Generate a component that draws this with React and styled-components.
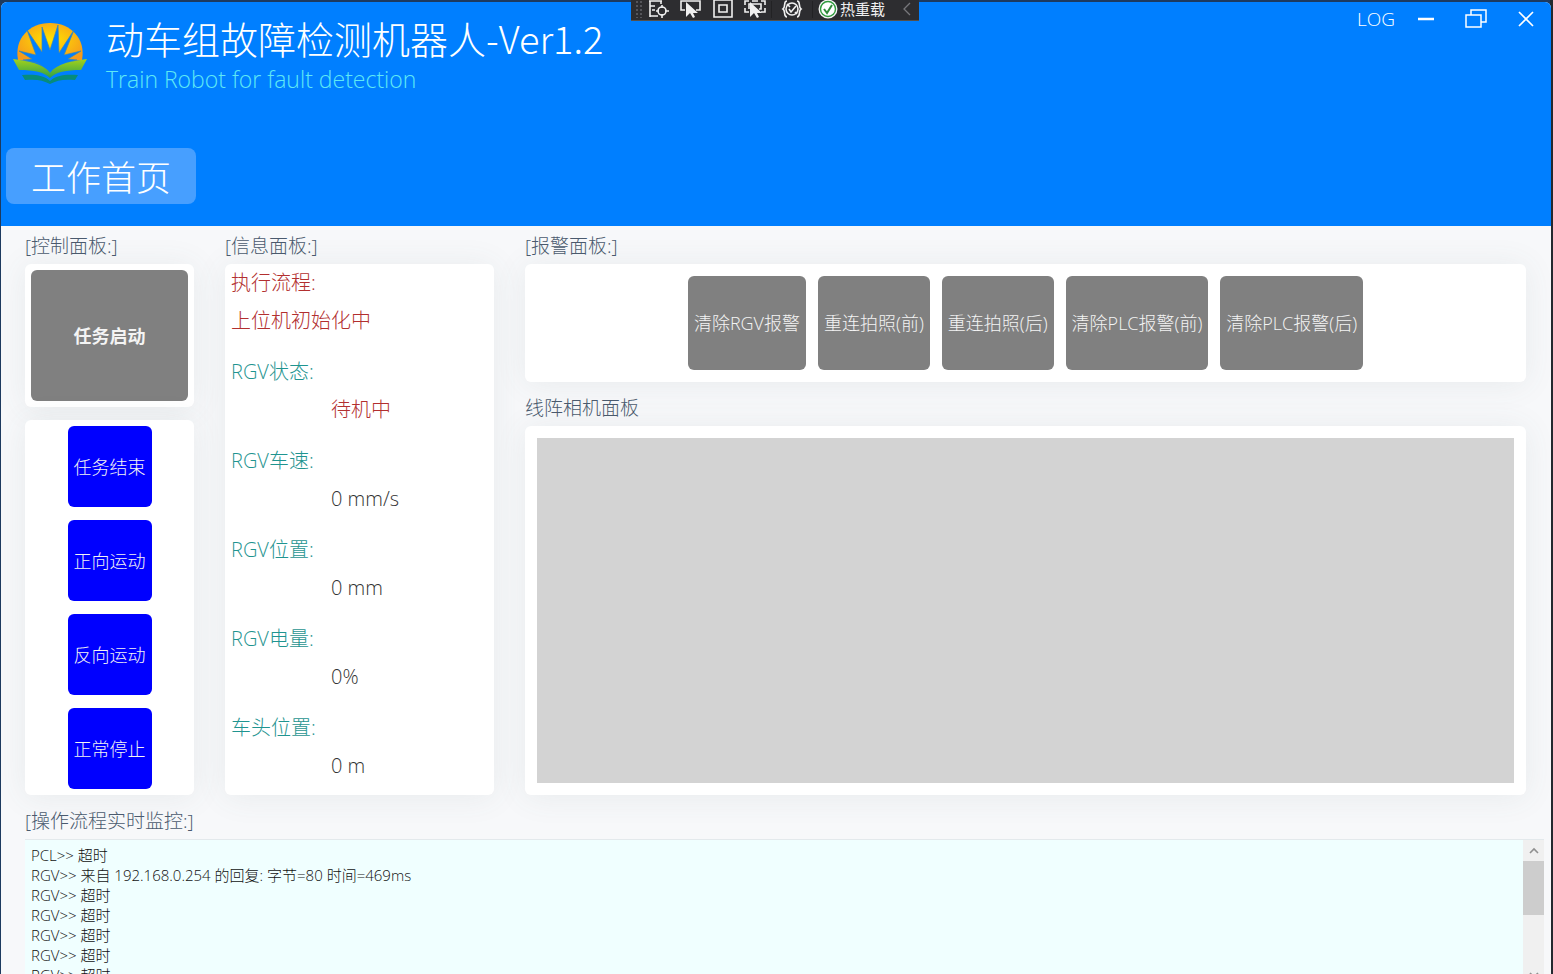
import styled, { createGlobalStyle, css } from 'styled-components';

const GlobalStyle = createGlobalStyle`
  *, *::before, *::after {
    box-sizing: border-box;
    margin: 0;
    padding: 0;
  }

  body {
    background-color: #24292f;
    font-family: 'Open Sans', 'Noto Sans CJK SC', sans-serif;
    font-weight: 300;
    overflow: hidden;
  }

  button {
    font: inherit;
    color: inherit;
    border: none;
    background: none;
    cursor: pointer;
  }
`;

const Desktop = styled.div`
  height: 100vh;
  padding: 2px 2px 0 1px;
  background-color: #1d3a5f;
  background-image: linear-gradient(#24292f, #24292f);
  background-size: 3px 100%;
  background-position: right;
  background-repeat: no-repeat;
  overflow: hidden;
`;

const Window = styled.div`
  min-height: 100%;
  background-color: #f7f8fa;
  border-radius: 6px 6px 0 0;
  overflow: hidden;
`;

const Header = styled.header`
  display: flex;
  flex-direction: column;
  justify-content: space-between;
  height: 224px;
  padding: 16px 5px 22px;
  background-color: #007fff;
  color: #fff;
`;

const HeaderTop = styled.div`
  display: flex;
  justify-content: space-between;
  align-items: flex-start;
`;

const Brand = styled.div`
  display: flex;
  gap: 18px;
  padding-left: 6px;
`;

const Logo = styled.svg`
  width: 76px;
  height: 64px;
  margin-top: 4px;
`;

const Title = styled.h1`
  font-family: 'Noto Sans CJK SC', sans-serif;
  font-size: 38px;
  font-weight: 300;
  line-height: 40px;
`;

const Subtitle = styled.p`
  font-size: 23px;
  line-height: 42px;
  color: #5fe8f5;
`;

const WindowActions = styled.div`
  display: flex;
  align-items: center;
  height: 32px;
  margin-top: -15px;
  gap: 10px;
`;

const WindowButton = styled.button`
  display: grid;
  place-items: center;
  min-width: 40px;
  height: 32px;
  font-size: 19px;
`;

const TabButton = styled.button`
  align-self: flex-start;
  width: 190px;
  height: 56px;
  padding-top: 4px;
  background-color: #479fff;
  border-radius: 8px;
  font-size: 35px;
  line-height: 52px;
`;

const DebugBar = styled.div`
  position: absolute;
  top: 0;
  left: 631px;
  display: flex;
  align-items: center;
  width: 288px;
  height: 21px;
  padding: 0 6px 2px 4px;
  background-color: #2d2d30;
  border-bottom: 1px solid #55504a;
  color: #f0f0f0;
  font-size: 16px;
`;

const DebugButton = styled.button`
  display: flex;
  align-items: center;
  justify-content: center;
  width: ${(props) => (props.$wide ? '42px' : '32px')};
  height: 17px;
  border-left: ${(props) => (props.$wide ? '1px solid #222224' : 'none')};
  border-right: ${(props) => (props.$wide ? '1px solid #222224' : 'none')};
`;

const Grip = styled.div`
  width: 8px;
  height: 18px;
  background-image: radial-gradient(#55555a 1px, transparent 1px);
  background-size: 4px 4px;
`;

const Reload = styled.button`
  display: flex;
  align-items: center;
  flex: 1;
  gap: 2px;
  padding-left: 5px;
  font-size: 15px;
  font-weight: 400;
  line-height: 18px;
  white-space: nowrap;
`;

const Main = styled.main`
  display: grid;
  grid-template-columns: 169px 269px 1fr;
  column-gap: 31px;
  padding: 0 25px 0 24px;
`;

const Column = styled.section`
  display: flex;
  flex-direction: column;
`;

const PanelTitle = styled.h2`
  padding: 7px 0 4px;
  font-size: 19px;
  font-weight: 300;
  line-height: 27px;
  color: #4a5a6e;
`;

const CameraTitle = styled(PanelTitle)`
  margin-top: 6px;
`;

const Card = styled.div`
  background-color: #fff;
  border-radius: 6px;
  box-shadow: 0 2px 32px rgba(80, 100, 95, 0.09);
`;

const StartCard = styled(Card)`
  display: flex;
  height: 143px;
  margin-bottom: 13px;
  padding: 6px;
`;

const MotionCard = styled(Card)`
  display: flex;
  flex-direction: column;
  align-items: center;
  gap: 13px;
  padding: 6px;
`;

const InfoCard = styled(Card)`
  flex: 1;
  padding: 0 6px;
  font-size: 20px;
  line-height: 38px;
`;

const AlarmCard = styled(Card)`
  display: flex;
  justify-content: center;
  gap: 12px;
  padding: 12px;
`;

const CameraCard = styled(Card)`
  display: flex;
  flex: 1;
  padding: 12px;
`;

const CameraView = styled.div`
  flex: 1;
  background-color: #d3d3d3;
`;

const ActionButton = styled.button`
  padding: 0 6px 2px;
  border-radius: 6px;
  font-size: 18px;
  color: #f4f4f4;
  white-space: nowrap;

  ${(props) =>
    props.$kind === 'start' &&
    css`
      flex: 1;
      background-color: #808080;
      font-weight: 700;
    `}

  ${(props) =>
    props.$kind === 'motion' &&
    css`
      height: 81px;
      background-color: #0000ff;
    `}

  ${(props) =>
    props.$kind === 'alarm' &&
    css`
      height: 94px;
      background-color: #808080;
    `}
`;

const InfoItem = styled.dl`
  margin-bottom: 13px;

  &:last-child {
    margin-bottom: 0;
  }
`;

const InfoLabel = styled.dt`
  color: ${(props) => (props.$alert ? '#b22f2f' : '#1f9490')};
`;

const InfoValue = styled.dd`
  padding-left: ${(props) => (props.$flush ? '0' : '100px')};
  color: ${(props) => (props.$alert ? '#b22f2f' : '#333')};
`;

const Monitor = styled.section`
  padding: 6px 7px 0 24px;
`;

const LogBox = styled.div`
  display: flex;
  height: 146px;
  border-top: 1px solid #e3e9ec;
  background-color: #f0ffff;
  overflow: hidden;
`;

const LogList = styled.ul`
  flex: 1;
  padding: 5px 6px;
  list-style: none;
  font-size: 15px;
  line-height: 20px;
  color: #111;
`;

const ScrollBar = styled.div`
  display: flex;
  flex-direction: column;
  width: 21px;
  background-color: #f0f0f0;
  color: #909090;
`;

const ScrollButton = styled.button`
  display: grid;
  place-items: center;
  height: 21px;
`;

const ScrollThumb = styled.div`
  height: 54px;
  margin-bottom: auto;
  background-color: #cdcdcd;
`;

const motions = ['任务结束', '正向运动', '反向运动', '正常停止'];

const alarms = [
  '清除RGV报警',
  '重连拍照(前)',
  '重连拍照(后)',
  '清除PLC报警(前)',
  '清除PLC报警(后)',
];

const infos = [
  { label: '执行流程:', value: '上位机初始化中', alertLabel: true, alert: true, flush: true },
  { label: 'RGV状态:', value: '待机中', alert: true },
  { label: 'RGV车速:', value: '0 mm/s' },
  { label: 'RGV位置:', value: '0 mm' },
  { label: 'RGV电量:', value: '0%' },
  { label: '车头位置:', value: '0 m' },
];

const logs = [
  'PCL>> 超时',
  'RGV>> 来自 192.168.0.254 的回复: 字节=80 时间=469ms',
  'RGV>> 超时',
  'RGV>> 超时',
  'RGV>> 超时',
  'RGV>> 超时',
  'RGV>> 超时',
];

function SunLogo() {
  return (
    <Logo viewBox="0 0 76 64" aria-hidden="true">
      <defs>
        <radialGradient id="sun" cx="50%" cy="45%" r="60%">
          <stop offset="0" stopColor="#ffe500" />
          <stop offset="1" stopColor="#f59a1c" />
        </radialGradient>
        <linearGradient id="leaf" x1="0" y1="0" x2="0" y2="1">
          <stop offset="0" stopColor="#a4d21a" />
          <stop offset="1" stopColor="#2fa04a" />
        </linearGradient>
      </defs>
      <path d="M6 38C2 17 17 1 38 1s36 16 32 37l-14 1H20z" fill="url(#sun)" />
      <path
        d="M11 38l9-1L7 29l17 4L15 8l15 22V5l8 23 8-25 1 28 15-23-10 25 17-4-13 8 9 1-11 3-14 11-14-11z"
        fill="#007fff"
        stroke="#3c86b0"
        strokeWidth="0.7"
      />
      <path
        d="M1 37c14 2 30 4 37 14 7-10 23-12 37-14l-6 11c-15 0-25 2-31 8-6-6-16-8-31-8z"
        fill="url(#leaf)"
      />
      <path
        d="M10 53c12-1 22 0 28 6 6-6 16-7 28-6l-3 5c-11-1-18 0-25 4-7-4-14-5-25-4z"
        fill="#078c7c"
      />
    </Logo>
  );
}

const iconProps = {
  width: 22,
  height: 20,
  viewBox: '0 0 22 20',
  fill: 'none',
  stroke: '#f0f0f0',
  strokeWidth: 1.6,
  'aria-hidden': true,
};

const cursorPath = 'M6 3v15l4-4 3 5 2-1-2-4h5z';

function DebugToolbar() {
  return (
    <DebugBar>
      <Grip />
      <DebugButton aria-label="实时可视化树">
        <svg {...iconProps}>
          <path d="M1 2h13M2 2v16M2 7h5M4 11h3M2 17h8M13 2v3" />
          <circle cx="14" cy="12" r="4" />
          <path d="M14 6v3M14 15v4M8 12h3M17 12h4" />
        </svg>
      </DebugButton>
      <DebugButton aria-label="选择元素">
        <svg {...iconProps}>
          <path d="M5 11H1V2h19v9h-4" />
          <path d={cursorPath} fill="#f0f0f0" stroke="none" />
        </svg>
      </DebugButton>
      <DebugButton aria-label="显示布局装饰器">
        <svg {...iconProps}>
          <path d="M2 1h18v17H2zM7 6h8v7H7z" />
        </svg>
      </DebugButton>
      <DebugButton aria-label="跟踪具有焦点的元素">
        <svg {...iconProps}>
          <path d="M1 6V2h4M17 2h4v4M21 9v4h-4M5 13H1V9M5 10V5h12v5h-2M8 2h6" />
          <path d={cursorPath} fill="#f0f0f0" stroke="none" />
        </svg>
      </DebugButton>
      <DebugButton $wide aria-label="绑定失败">
        <svg {...iconProps}>
          <path d="M6 2C2 2 5 8 2 10c3 2 0 8 4 8M16 2c4 0 1 6 4 8-3 2 0 8-4 8" />
          <circle cx="11" cy="10" r="6" />
          <path d="M8 10l2 3 5-6M6 5l3 3M16 15l-2-2" />
        </svg>
      </DebugButton>
      <Reload>
        <svg width="20" height="20" viewBox="0 0 20 20" aria-hidden="true">
          <circle cx="10" cy="10" r="9.5" fill="#f4f4f4" />
          <circle cx="10" cy="10" r="7.5" fill="#fff" stroke="#2f9a3c" strokeWidth="1.4" />
          <path d="M6 10l3 4 5-8" fill="none" stroke="#2f8a3a" strokeWidth="2" />
        </svg>
        热重载
      </Reload>
      <svg width="12" height="14" viewBox="0 0 12 14" aria-hidden="true">
        <path d="M9 1L3 7l6 6" fill="none" stroke="#77777b" strokeWidth="1.3" />
      </svg>
    </DebugBar>
  );
}

function App() {
  return (
    <>
      <GlobalStyle />
      <Desktop>
        <Window>
          <Header>
            <HeaderTop>
              <Brand>
                <SunLogo />
                <div>
                  <Title>动车组故障检测机器人-Ver1.2</Title>
                  <Subtitle>Train Robot for fault detection</Subtitle>
                </div>
              </Brand>
              <WindowActions>
                <WindowButton>LOG</WindowButton>
                <WindowButton aria-label="最小化">
                  <svg width="18" height="18" viewBox="0 0 18 18">
                    <path d="M1 9h16" stroke="#fff" strokeWidth="2.5" />
                  </svg>
                </WindowButton>
                <WindowButton aria-label="还原">
                  <svg width="22" height="20" viewBox="0 0 22 20" fill="none">
                    <path
                      d="M1 6h15v12H1zM6 6V1h15v12h-5"
                      stroke="#fff"
                      strokeWidth="1.5"
                    />
                  </svg>
                </WindowButton>
                <WindowButton aria-label="关闭">
                  <svg width="16" height="16" viewBox="0 0 16 16">
                    <path d="M1 1l14 14M15 1L1 15" stroke="#fff" strokeWidth="1.7" />
                  </svg>
                </WindowButton>
              </WindowActions>
            </HeaderTop>
            <TabButton>工作首页</TabButton>
          </Header>

          <Main>
            <Column>
              <PanelTitle>[控制面板:]</PanelTitle>
              <StartCard>
                <ActionButton $kind="start">任务启动</ActionButton>
              </StartCard>
              <MotionCard>
                {motions.map((name) => (
                  <ActionButton key={name} $kind="motion">
                    {name}
                  </ActionButton>
                ))}
              </MotionCard>
            </Column>

            <Column>
              <PanelTitle>[信息面板:]</PanelTitle>
              <InfoCard>
                {infos.map((info) => (
                  <InfoItem key={info.label}>
                    <InfoLabel $alert={info.alertLabel}>{info.label}</InfoLabel>
                    <InfoValue $alert={info.alert} $flush={info.flush}>
                      {info.value}
                    </InfoValue>
                  </InfoItem>
                ))}
              </InfoCard>
            </Column>

            <Column>
              <PanelTitle>[报警面板:]</PanelTitle>
              <AlarmCard>
                {alarms.map((name) => (
                  <ActionButton key={name} $kind="alarm">
                    {name}
                  </ActionButton>
                ))}
              </AlarmCard>
              <CameraTitle>线阵相机面板</CameraTitle>
              <CameraCard>
                <CameraView />
              </CameraCard>
            </Column>
          </Main>

          <Monitor>
            <PanelTitle>[操作流程实时监控:]</PanelTitle>
            <LogBox>
              <LogList>
                {logs.map((line, index) => (
                  <li key={index}>{line}</li>
                ))}
              </LogList>
              <ScrollBar>
                <ScrollButton aria-label="向上滚动">
                  <svg width="10" height="8" viewBox="0 0 10 8">
                    <path d="M1 6l4-4 4 4" fill="none" stroke="#909090" strokeWidth="1.6" />
                  </svg>
                </ScrollButton>
                <ScrollThumb />
                <ScrollButton aria-label="向下滚动">
                  <svg width="10" height="8" viewBox="0 0 10 8">
                    <path d="M1 2l4 4 4-4" fill="none" stroke="#909090" strokeWidth="1.6" />
                  </svg>
                </ScrollButton>
              </ScrollBar>
            </LogBox>
          </Monitor>
        </Window>
      </Desktop>
      <DebugToolbar />
    </>
  );
}

export default App;
